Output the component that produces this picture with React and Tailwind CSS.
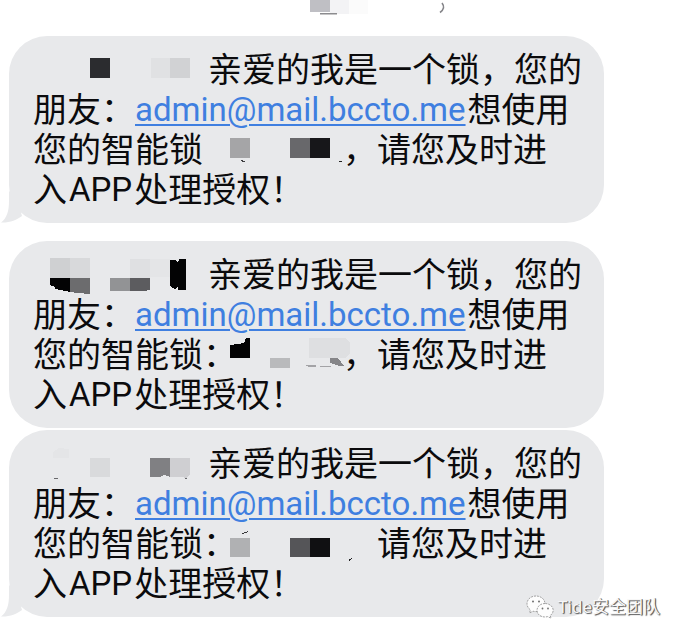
function Mosaic({ width, label, children }) {
  return (
    <svg
      className="h-10 shrink-0 overflow-visible"
      width={width}
      height="40"
      viewBox={`0 0 ${width} 40`}
      role="img"
      aria-label={label}
      shapeRendering="crispEdges"
    >
      {children}
    </svg>
  );
}

function Tail() {
  return (
    <svg className="absolute bottom-0 -left-2 h-8 w-10" viewBox="0 0 40 32" aria-hidden="true">
      <path d="M8 0V10C8 20 6 27 0 31.500C8 32 16 29 21 25L16 8Z" fill="#e8e9eb" />
    </svg>
  );
}

function Message({ sender, lock, comma = true, colon = true, tail = false }) {
  return (
    <article className="relative rounded-[38px] bg-[#e8e9eb] pt-3.5 pr-5 pb-[13px] pl-6 text-[34px] leading-10 whitespace-nowrap text-[#0b0b0d]">
      {tail && <Tail />}
      <div className="flex h-10">
        {sender}
        <span>亲爱的我是一个锁，您的</span>
      </div>
      <div className="flex h-10">
        <span>朋友：</span>
        <a
          href="mailto:admin@mail.bccto.me"
          className="mr-0.5 text-[33px] text-[#3f7fe0] underline decoration-2 underline-offset-3"
        >
          admin@mail.bccto.me
        </a>
        <span>想使用</span>
      </div>
      <div className="flex h-10">
        <span>{colon ? "您的智能锁：" : "您的智能锁"}</span>
        {lock}
        <span>{comma ? "，请您及时进" : "请您及时进"}</span>
      </div>
      <div className="flex h-10">
        <span>入</span>
        <span className="mx-0.5 text-[33px]">APP</span>
        <span>处理授权！</span>
      </div>
    </article>
  );
}

function WeChatIcon() {
  return (
    <svg className="h-6 w-7" viewBox="0 0 28 24" aria-hidden="true">
      <g fill="#fdfdfd" stroke="#8d8d8d" strokeWidth="0.8" strokeDasharray="2 1">
        <path d="M10 1C4.700 1 1 4.500 1 8.800C1 11.300 2.300 13.400 4.400 14.800L3.600 18L7 16.200C8 16.500 9 16.600 10 16.600C15.200 16.600 19 13.200 19 8.800C19 4.500 15.200 1 10 1Z" />
        <path d="M19 8.500C14.500 8.500 11 11.500 11 15.300C11 19.200 14.500 22 19 22C20 22 20.900 21.900 21.700 21.600L25 23.200L24.200 20.500C26 19.200 27.200 17.400 27.200 15.300C27.200 11.500 23.500 8.500 19 8.500Z" />
      </g>
      <g fill="#6f6f6f">
        <circle cx="7" cy="6.500" r="1" />
        <circle cx="13" cy="6.500" r="1" />
        <circle cx="16.500" cy="13.500" r="0.900" />
        <circle cx="22" cy="13.500" r="0.900" />
      </g>
    </svg>
  );
}

export default function App() {
  return (
    <main className="relative overflow-hidden bg-white pr-[78px] pb-[19px] pl-[9px] font-[Roboto,'Noto_Sans_CJK_SC',sans-serif]">
      <header className="flex h-9 justify-center pl-[156px]">
        <svg className="h-5 w-[150px]" viewBox="0 0 150 20" role="img" aria-label="Hidden date">
          <path d="M0 0H20V12H0Z" fill="#bfbfc4" />
          <path d="M20 0H39V14H20Z" fill="#f3f3f5" />
          <path d="M39 0H58V14H39Z" fill="#fbfbfb" />
          <path d="M10 13H27V14.500H10Z" fill="#8c8c8f" />
          <path d="M132 3Q136 8 130 12.500" fill="none" stroke="#858589" strokeWidth="1.600" />
        </svg>
      </header>

      <Message
        tail
        colon={false}
        sender={
          <Mosaic width={175} label="Hidden sender">
            <path d="M57 8H77V28H57Z" fill="#2b2c2f" />
            <path d="M118 8H137V28H118Z" fill="#e0e1e3" />
            <path d="M137 8H157V28H137Z" fill="#d1d2d4" />
          </Mosaic>
        }
        lock={
          <Mosaic width={140} label="Hidden lock name">
            <path d="M27 8H47V28H27Z" fill="#a5a5a7" />
            <path d="M87 8H107V28H87Z" fill="#68686b" />
            <path d="M107 8H127V28H107Z" fill="#17171a" />
            <path d="M38 30H40V31H42V32H39V31H38Z" fill="#3c3c3f" />
            <path d="M136 31H139V32H136Z" fill="#222" />
          </Mosaic>
        }
      />

      <div className="mt-[18px] flex flex-col gap-0.5">
        <Message
          sender={
            <Mosaic width={175} label="Hidden sender">
              <path d="M17 3H37V23H17Z" fill="#cfd0d2" />
              <path d="M37 3H57V23H37Z" fill="#d8d9db" />
              <path d="M17 23H37V37L22 34V32L17 30Z" fill="#030304" />
              <path d="M37 23H57V39L45 38L37 37Z" fill="#6c6c6e" />
              <path d="M97 4H117V23H97Z" fill="#dfe0e2" />
              <path d="M117 4H137V22H117Z" fill="#e4e5e7" />
              <path d="M77 23H97V36H77Z" fill="#929395" />
              <path d="M97 23H117V35L111 36H97Z" fill="#5c5c5f" />
              <path d="M137 5H142L145 8L146 4H153V35H145V32L142 34L137 31Z" fill="#030304" />
            </Mosaic>
          }
          lock={
            <Mosaic width={106} label="Hidden lock name">
              <path d="M-7 10L7 8L9 3H13V23H-7Z" fill="#030304" />
              <path d="M33 23H53V33H33Z" fill="#b9babc" />
              <path d="M72 3H108L113 7V18L108 23H72Z" fill="#dedfe1" />
              <path d="M93 23H101L107 31H102L93 28Z" fill="#858588" />
              <path d="M68 30H79V32H72ZM83 31H94V32H83Z" fill="#a3a3a6" />
            </Mosaic>
          }
        />
        <Message
          tail
          comma={false}
          sender={
            <Mosaic width={175} label="Hidden sender">
              <path d="M20 8L26 4L36 5V14H20Z" fill="#e4e5e7" />
              <path d="M57 14H77V33H57Z" fill="#d9dadc" />
              <path d="M117 14H137V33L131 31L127 33H117Z" fill="#808083" />
              <path d="M137 14H157V31L152 35L150 33H137Z" fill="#cfcfd2" />
              <path d="M21 34H25V35H21ZM152 34H154V35H152Z" fill="#68686b" />
            </Mosaic>
          }
          lock={
            <Mosaic width={140} label="Hidden lock name">
              <path d="M-7 14H13V33H-7Z" fill="#b0b1b3" />
              <path d="M53 14H73V33H53Z" fill="#555558" />
              <path d="M73 14H93V33H73Z" fill="#101012" />
              <path d="M5 9L11 7V8L5 10Z" fill="#38383a" />
              <path d="M111 36L115 34V35L112 37Z" fill="#222224" />
            </Mosaic>
          }
        />
      </div>

      <footer className="absolute right-[22px] bottom-[17px] flex items-center gap-1 font-['Noto_Sans','Noto_Sans_CJK_SC',sans-serif] text-[17px] leading-6 text-[#f7f7f7] [text-shadow:1px_1px_1px_#555,1px_0_0_#777]">
        <WeChatIcon />
        <span>Tide安全团队</span>
      </footer>
    </main>
  );
}
